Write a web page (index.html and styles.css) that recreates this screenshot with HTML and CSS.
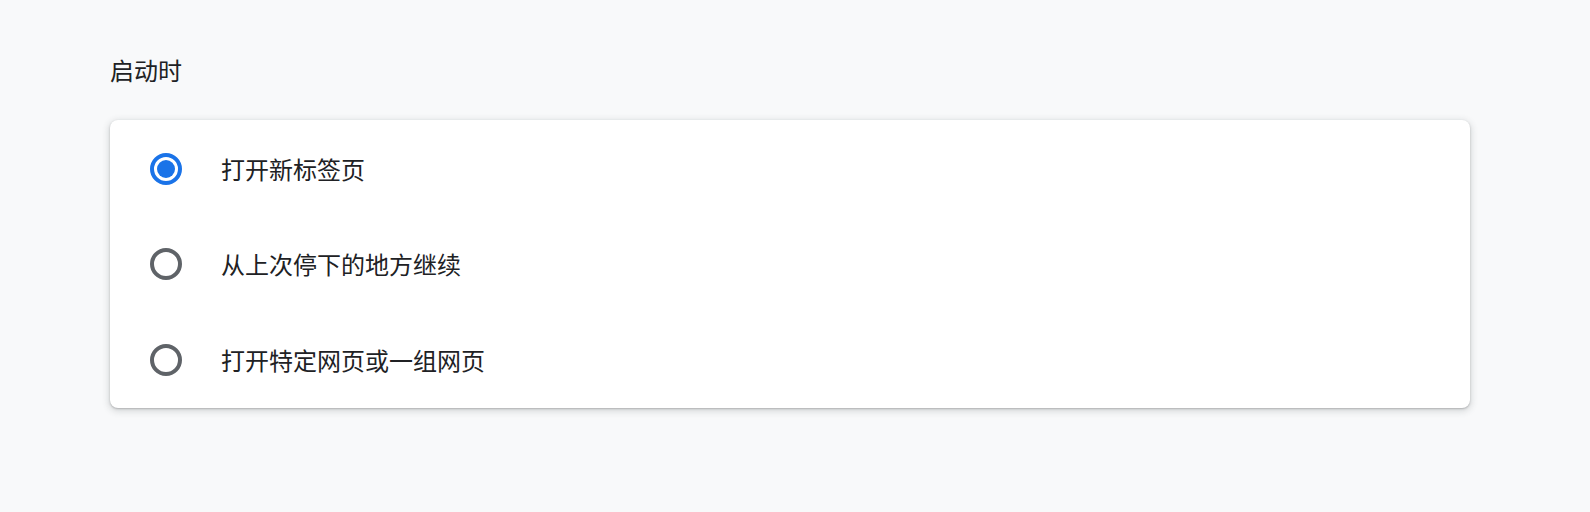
FILE: index.html
```html
<!DOCTYPE html>
<html lang="zh-CN">
<head>
    <meta charset="UTF-8">
    <meta name="viewport" content="width=device-width, initial-scale=1.0">
    <title>启动时</title>
    <link rel="stylesheet" href="styles.css">
</head>
<body>
    <div class="section">
        <h2 class="section-title">启动时</h2>
        <div class="card">
            <label class="option">
                <span class="radio checked">
                    <svg width="32" height="32" viewBox="0 0 32 32">
                        <circle cx="16" cy="16" r="14" fill="none" stroke="#1a73e8" stroke-width="4"/>
                        <circle cx="16" cy="16" r="9" fill="#1a73e8"/>
                    </svg>
                </span>
                <span class="option-label">打开新标签页</span>
            </label>
            <label class="option">
                <span class="radio">
                    <svg width="32" height="32" viewBox="0 0 32 32">
                        <circle cx="16" cy="16" r="14" fill="none" stroke="#5f6368" stroke-width="4"/>
                    </svg>
                </span>
                <span class="option-label">从上次停下的地方继续</span>
            </label>
            <label class="option">
                <span class="radio">
                    <svg width="32" height="32" viewBox="0 0 32 32">
                        <circle cx="16" cy="16" r="14" fill="none" stroke="#5f6368" stroke-width="4"/>
                    </svg>
                </span>
                <span class="option-label">打开特定网页或一组网页</span>
            </label>
        </div>
    </div>
</body>
</html>
```

FILE: styles.css
```css
* {
    margin: 0;
    padding: 0;
    box-sizing: border-box;
    font-family: 'Noto Sans CJK SC', 'Noto Sans', sans-serif;
}

body {
    background-color: #f8f9fa;
    color: #202124;
    min-height: 100vh;
}

.section {
    padding: 54px 120px 0 110px;
}

.section-title {
    font-size: 24px;
    font-weight: 400;
    line-height: 32px;
    margin-bottom: 34px;
}

.card {
    background: #fff;
    border-radius: 8px;
    box-shadow: 0 1px 2px rgba(60, 64, 67, 0.3), 0 2px 6px 2px rgba(60, 64, 67, 0.15);
}

.option {
    display: flex;
    align-items: center;
    height: 96px;
    padding-left: 40px;
    gap: 39px;
    cursor: pointer;
}

.option:first-child {
    padding-top: 1px;
}

.radio {
    display: flex;
    width: 32px;
    height: 32px;
}

.option-label {
    font-size: 24px;
    line-height: 32px;
}
```
